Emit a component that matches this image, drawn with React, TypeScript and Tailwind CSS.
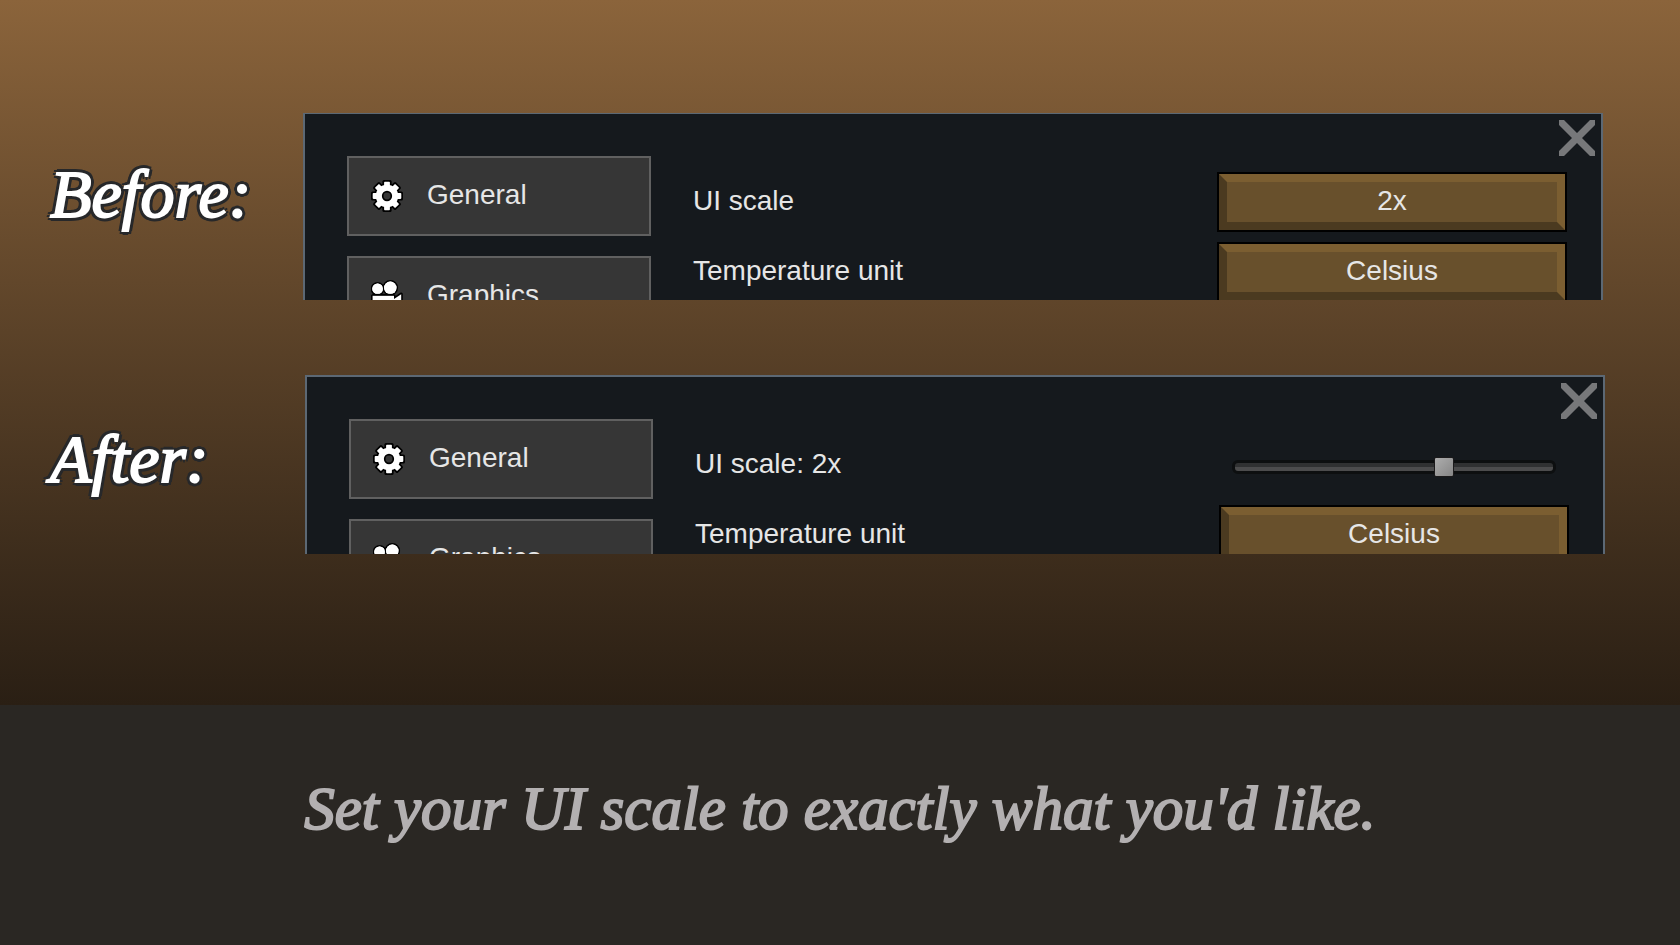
import type { ReactNode } from 'react';

function GearIcon() {
  const angles = [0, 45, 90, 135];
  return (
    <svg className="h-8 w-8 shrink-0" viewBox="0 0 32 32" aria-hidden="true">
      <g fill="#000">
        <circle cx="16" cy="16" r="13" />
        {angles.map((a) => (
          <rect key={a} x="11.4" y="0" width="9.2" height="32" rx="1.6" transform={`rotate(${a} 16 16)`} />
        ))}
      </g>
      <g fill="#fff">
        <circle cx="16" cy="16" r="11.2" />
        {angles.map((a) => (
          <rect key={a} x="13.1" y="1.7" width="5.8" height="28.6" rx="0.8" transform={`rotate(${a} 16 16)`} />
        ))}
      </g>
      <circle cx="16" cy="16" r="4.3" fill="#363636" stroke="#000" strokeWidth="1.7" />
    </svg>
  );
}

function CameraIcon() {
  return (
    <svg className="h-8 w-8 shrink-0" viewBox="0 0 32 32" aria-hidden="true">
      <g fill="#fff" stroke="#000" strokeWidth="3.2" strokeLinejoin="round" paintOrder="stroke">
        <circle cx="6.6" cy="8.8" r="5.3" />
        <circle cx="19.3" cy="7.8" r="6.2" />
        <path d="M1.6 15.8H23v3.2l7.2-4.8v15.2L23 25v5.2H1.6z" />
      </g>
      <circle cx="6.6" cy="8.8" r="5.3" fill="#fff" />
      <circle cx="19.3" cy="7.8" r="6.2" fill="#fff" />
      <path d="M1.6 14.6H23" stroke="#000" strokeWidth="1.4" />
    </svg>
  );
}

function CloseButton() {
  return (
    <button type="button" aria-label="Close" className="absolute right-[6px] top-[6px] h-9 w-9">
      <svg className="h-9 w-9" viewBox="0 0 36 36" aria-hidden="true">
        <path
          fill="#77787a"
          d="M0 0h5L18 13 31 0h5v5L23 18l13 13v5h-5L18 23 5 36H0v-5l13-13L0 5z"
        />
      </svg>
    </button>
  );
}

function TabButton({ icon, children }: { icon: ReactNode; children: ReactNode }) {
  return (
    <button
      type="button"
      className="flex h-20 w-full shrink-0 items-center gap-6 border-2 border-[#606060] bg-[#363636] pl-[22px] text-left"
    >
      {icon}
      <span className="pb-0.5">{children}</span>
    </button>
  );
}

function BevelButton({ label, children }: { label: string; children: ReactNode }) {
  return (
    <button type="button" aria-label={label} className="h-[60px] w-full border-2 border-black">
      <span className="flex h-full items-center justify-center border-8 border-t-[#7b5e31] border-r-[#7b5e31] border-b-[#4b3a20] border-l-[#4b3a20] bg-[#68502c] pb-0.5">
        {children}
      </span>
    </button>
  );
}

function Row({ label, children }: { label: ReactNode; children: ReactNode }) {
  return (
    <div className="flex h-[60px] shrink-0 items-center justify-between">
      <div className="pb-0.5">{label}</div>
      <div className="flex w-[350px] items-center justify-center">{children}</div>
    </div>
  );
}

function SettingsPanel({ className, children }: { className: string; children: ReactNode }) {
  return (
    <section
      className={`relative flex min-w-0 flex-1 items-start overflow-hidden border-x-2 border-[#5c6874] bg-[#15191d] pl-[42px] pr-[34px] font-['Liberation_Sans',Arial,sans-serif] text-[28px] leading-8 text-[#e6e6e6] ${className}`}
    >
      <nav className="flex w-[304px] shrink-0 flex-col gap-5 pt-[42px]">
        <TabButton icon={<GearIcon />}>General</TabButton>
        <TabButton icon={<CameraIcon />}>Graphics</TabButton>
      </nav>
      <div className="flex min-w-0 flex-1 flex-col gap-[10px] pl-[42px] pt-[58px]">{children}</div>
      <CloseButton />
    </section>
  );
}

function Heading({ className, children }: { className: string; children: ReactNode }) {
  return (
    <h2
      className={`shrink-0 pl-[50px] font-['Liberation_Serif','Times_New_Roman',serif] text-[68px] leading-[76px] italic text-white [-webkit-text-stroke:2px_#fff] [text-shadow:4px_0_#27282a,-4px_0_#27282a,0_4px_#27282a,0_-4px_#27282a,3px_3px_#27282a,-3px_3px_#27282a,3px_-3px_#27282a,-3px_-3px_#27282a] ${className}`}
    >
      {children}
    </h2>
  );
}

export default function App() {
  return (
    <main className="flex min-h-screen flex-col bg-[#2a2723]">
      <div className="flex flex-col gap-[75px] bg-linear-to-b from-[#8b643b] to-[#2a1f14] pb-[151px] pt-[113px]">
        <div className="flex items-start pr-[77px]">
          <Heading className="w-[303px] pt-[43px]">Before:</Heading>
          <SettingsPanel className="h-[187px] border-t">
            <Row label="UI scale">
              <BevelButton label="UI scale: 2x">2x</BevelButton>
            </Row>
            <Row label="Temperature unit">
              <BevelButton label="Temperature unit: Celsius">Celsius</BevelButton>
            </Row>
          </SettingsPanel>
        </div>
        <div className="flex items-start pr-[75px]">
          <Heading className="w-[305px] pt-[46px]">After:</Heading>
          <SettingsPanel className="h-[179px] border-t-2">
            <Row label={<label htmlFor="ui-scale">UI scale: 2x</label>}>
              <input
                id="ui-scale"
                type="range"
                min={0}
                max={3}
                step={0.01}
                defaultValue={2}
                className="mt-1 h-5 w-[324px] appearance-none bg-transparent [&::-webkit-slider-runnable-track]:h-[14px] [&::-webkit-slider-runnable-track]:rounded-[6px] [&::-webkit-slider-runnable-track]:border-[3px] [&::-webkit-slider-runnable-track]:border-[#0d0f10] [&::-webkit-slider-runnable-track]:bg-[linear-gradient(#303132_50%,#4c4c4d_50%)] [&::-webkit-slider-thumb]:-mt-[6px] [&::-webkit-slider-thumb]:h-5 [&::-webkit-slider-thumb]:w-5 [&::-webkit-slider-thumb]:appearance-none [&::-webkit-slider-thumb]:rounded-[2px] [&::-webkit-slider-thumb]:border [&::-webkit-slider-thumb]:border-[#1b1a1b] [&::-webkit-slider-thumb]:bg-[linear-gradient(135deg,#adadad,#868686)]"
              />
            </Row>
            <Row label="Temperature unit">
              <BevelButton label="Temperature unit: Celsius">Celsius</BevelButton>
            </Row>
          </SettingsPanel>
        </div>
      </div>
      <p className="px-8 pt-[68px] text-center font-['Liberation_Serif','Times_New_Roman',serif] text-[61px] leading-[72px] italic text-[#b3b0b1] [-webkit-text-stroke:2px_#b3b0b1]">
        Set your UI scale to exactly what you'd like.
      </p>
    </main>
  );
}
